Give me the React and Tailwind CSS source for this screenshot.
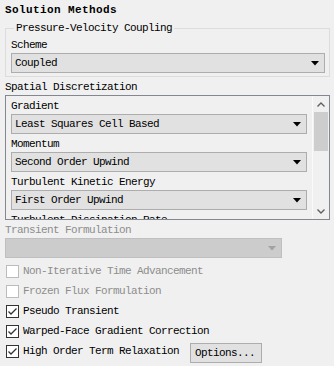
import React from 'react'

const mono = { fontFamily: '"Liberation Mono", "DejaVu Sans Mono", monospace' }

const Arrow = ({ disabled }) => (
  <svg width="8" height="5" viewBox="0 0 8 5" className="shrink-0">
    <path d="M0 0H8L4 4.5Z" fill={disabled ? '#a2a2a2' : '#000'} />
  </svg>
)

const Select = ({ value, className = '', disabled }) => (
  <div
    className={`shrink-0 flex items-center justify-between h-[20px] border pl-[3px] pr-[5px] ${
      disabled ? 'border-[#bfbfbf] bg-[#cccccc]' : 'border-[#adadad] bg-[#e1e1e1]'
    } ${className}`}
  >
    <span className="leading-[14px]">{value}</span>
    <Arrow disabled={disabled} />
  </div>
)

const Label = ({ children, className = '' }) => (
  <div className={`shrink-0 flex items-end h-[18px] pb-[2px] leading-[12px] whitespace-nowrap ${className}`}>{children}</div>
)

const Check = ({ label, checked, disabled, children }) => (
  <div className="flex items-center h-[20px]">
    <div
      className={`ml-[1px] w-[13px] h-[13px] border bg-white flex items-center justify-center shrink-0 ${
        disabled ? 'border-[#bcbcbc]' : 'border-[#333333]'
      }`}
    >
      {checked && (
        <svg width="11" height="11" viewBox="0 0 11 11">
          <path d="M1.5 5.5L4 8L9.5 2.5" fill="none" stroke="#333" strokeWidth="1.3" />
        </svg>
      )}
    </div>
    <span className={`ml-[4px] leading-[14px] ${disabled ? 'text-[#8d8d8d]' : ''}`}>{label}</span>
    {children}
  </div>
)

export default function App() {
  const rows = [
    ['Gradient', 'Least Squares Cell Based'],
    ['Momentum', 'Second Order Upwind'],
    ['Turbulent Kinetic Energy', 'First Order Upwind'],
    ['Turbulent Dissipation Rate', 'First Order Upwind'],
  ]

  return (
    <div
      className="w-[334px] h-[366px] bg-[#f0f0f0] text-black text-[11px] tracking-[-0.6px] overflow-hidden"
      style={mono}
    >
      <div className="h-[22px] pt-[4px] pl-[5px] font-bold leading-[13px] tracking-[0.4px]">Solution Methods</div>

      {/* Pressure-Velocity Coupling */}
      <fieldset className="ml-[5px] w-[325px] border border-[#dcdcdc] pl-[5px] pr-[4px] pb-[3px]">
        <legend className="ml-[3px] px-[2px] leading-[12px]">Pressure-Velocity Coupling</legend>
        <Label className="h-[19px]">Scheme</Label>
        <Select value="Coupled" />
      </fieldset>

      <Label className="pl-[5px]">Spatial Discretization</Label>

      {/* Spatial discretization scroll panel */}
      <div className="ml-[5px] w-[325px] h-[125px] border border-[#828790] flex overflow-hidden">
        <div className="flex-1 flex flex-col pl-[5px] pr-[5px] overflow-hidden">
          {rows.map(([label, value], i) => (
            <React.Fragment key={label}>
              <Label className={i === 0 ? 'h-[17px]' : ''}>{label}</Label>
              <Select value={value} />
            </React.Fragment>
          ))}
        </div>
        <div className="w-[17px] shrink-0 flex flex-col border-l border-[#fafafa]">
          <div className="h-[16px] flex items-center justify-center">
            <svg width="8" height="5" viewBox="0 0 8 5">
              <path d="M0.5 4.5L4 1L7.5 4.5" fill="none" stroke="#606060" strokeWidth="1.4" />
            </svg>
          </div>
          <div className="mx-[1px] h-[39px] bg-[#cdcdcd]" />
          <div className="flex-1" />
          <div className="h-[16px] flex items-center justify-center">
            <svg width="8" height="5" viewBox="0 0 8 5">
              <path d="M0.5 0.5L4 4L7.5 0.5" fill="none" stroke="#606060" strokeWidth="1.4" />
            </svg>
          </div>
        </div>
      </div>

      <Label className="pl-[5px] text-[#8d8d8d]">Transient Formulation</Label>
      <Select value="" disabled className="ml-[5px] w-[277px]" />

      <div className="mt-[3px] pl-[5px] flex flex-col">
        <Check label="Non-Iterative Time Advancement" disabled />
        <Check label="Frozen Flux Formulation" disabled />
        <Check label="Pseudo Transient" checked />
        <Check label="Warped-Face Gradient Correction" checked />
        <Check label="High Order Term Relaxation" checked>
          <button className="ml-[11px] mt-[3px] w-[72px] h-[20px] border border-[#adadad] bg-[#e1e1e1] text-left pl-[4px] leading-[14px]">
            Options...
          </button>
        </Check>
      </div>
    </div>
  )
}
